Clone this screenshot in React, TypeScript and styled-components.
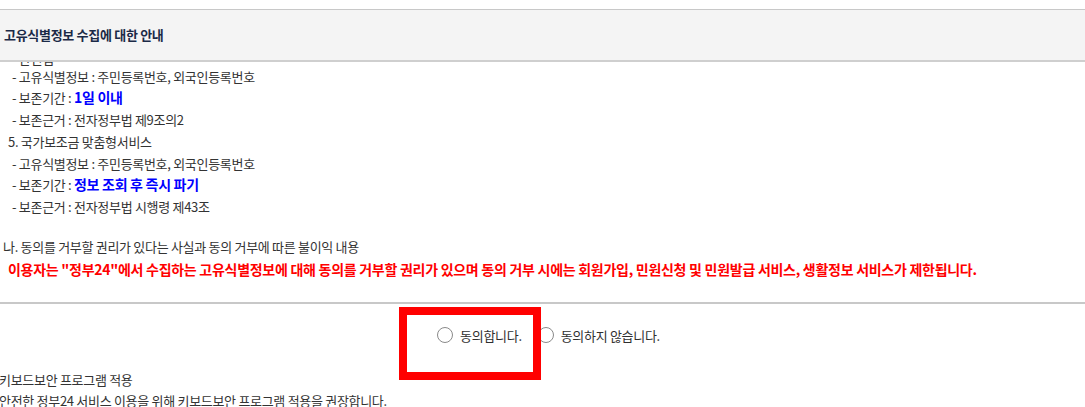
import React, { useLayoutEffect, useRef } from "react";
import styled, { createGlobalStyle } from "styled-components";

const Global = createGlobalStyle`
  html, body { margin: 0; padding: 0; background: #fff; }
  body { font-family: "Noto Sans CJK KR", "Noto Sans", sans-serif; color: #333; overflow: hidden; }
`;

const Page = styled.div`
  position: relative;
  width: 1085px;
  height: 407px;
  padding-top: 9px;
  box-sizing: border-box;
  overflow: hidden;
`;

const Header = styled.div`
  height: 50px;
  border-top: 1px solid #c8c8c8;
  border-bottom: 2px solid #cfcfcf;
  background: #f4f4f4;
  display: flex;
  align-items: center;
  padding-left: 4px;
`;

const HeaderTitle = styled.h2`
  margin: 0;
  font-size: 13px;
  font-weight: 700;
  color: #1b2a47;
  letter-spacing: -0.3px;
  transform: translateY(-1px);
`;

const Scroll = styled.div`
  height: 240px;
  overflow: hidden;
`;

const Body = styled.div`
  font-size: 13px;
  line-height: 21.7px;
  letter-spacing: -0.3px;
  color: #333;
  padding-bottom: 30px;
`;

const Line = styled.div<{ $indent: number; $tight?: boolean }>`
  padding-left: ${(p) => p.$indent}px;
  white-space: nowrap;
  margin-bottom: ${(p) => (p.$tight ? "-4px" : "0")};
`;

const Strong = styled.strong<{ $color: string }>`
  color: ${(p) => p.$color};
  font-weight: 700;
  font-size: 14px;
`;

const Gap = styled.div`
  height: 18.5px;
`;

const Warning = styled.div`
  padding-left: 8px;
  color: #ff0000;
  font-weight: 700;
  font-size: 14px;
  line-height: 23px;
  letter-spacing: -0.28px;
  white-space: nowrap;
`;

const Divider = styled.hr`
  margin: 0;
  border: 0;
  border-top: 2px solid #c8c8c8;
`;

const Choices = styled.div`
  display: flex;
  justify-content: center;
  gap: 16px;
  height: 62px;
  align-items: center;
  padding-left: 12px;
`;

const Choice = styled.label`
  display: flex;
  align-items: center;
  gap: 7px;
  font-size: 13px;
  letter-spacing: -0.3px;
  color: #2f2f2f;
`;

const Circle = styled.span`
  width: 16px;
  height: 16px;
  border-radius: 50%;
  border: 1px solid #8a8a8a;
  background: #fff;
  box-sizing: border-box;
`;

const Footer = styled.div`
  font-size: 13px;
  line-height: 20.5px;
  letter-spacing: -0.3px;
  color: #333;
  margin-left: -1px;
  margin-top: 4px;
`;

const Highlight = styled.div`
  position: absolute;
  left: 399px;
  top: 307px;
  width: 142px;
  height: 73px;
  border: 8px solid #ff0000;
  box-sizing: border-box;
  pointer-events: none;
`;

export default function App() {
  const ref = useRef<HTMLDivElement>(null);
  useLayoutEffect(() => {
    if (ref.current) ref.current.scrollTop = 14;
  }, []);
  return (
    <>
      <Global />
      <Page>
        <Header>
          <HeaderTitle>고유식별정보 수집에 대한 안내</HeaderTitle>
        </Header>
        <Scroll ref={ref}>
          <Body>
            <Line $indent={12} $tight>
              - 관련법
            </Line>
            <Line $indent={12}>- 고유식별정보 : 주민등록번호, 외국인등록번호</Line>
            <Line $indent={12}>
              - 보존기간 : <Strong $color="#0000ff">1일 이내</Strong>
            </Line>
            <Line $indent={12}>- 보존근거 : 전자정부법 제9조의2</Line>
            <Line $indent={8}>5. 국가보조금 맞춤형서비스</Line>
            <Line $indent={12}>- 고유식별정보 : 주민등록번호, 외국인등록번호</Line>
            <Line $indent={12}>
              - 보존기간 : <Strong $color="#0000ff">정보 조회 후 즉시 파기</Strong>
            </Line>
            <Line $indent={12}>- 보존근거 : 전자정부법 시행령 제43조</Line>
            <Gap />
            <Line $indent={3}>나. 동의를 거부할 권리가 있다는 사실과 동의 거부에 따른 불이익 내용</Line>
            <Warning>
              이용자는 "정부24"에서 수집하는 고유식별정보에 대해 동의를 거부할 권리가 있으며 동의 거부 시에는 회원가입, 민원신청 및 민원발급 서비스, 생활정보 서비스가 제한됩니다.
            </Warning>
          </Body>
        </Scroll>
        <Divider />
        <Choices>
          <Choice>
            <Circle />
            동의합니다.
          </Choice>
          <Choice>
            <Circle />
            동의하지 않습니다.
          </Choice>
        </Choices>
        <Footer>
          <div>키보드보안 프로그램 적용</div>
          <div>안전한 정부24 서비스 이용을 위해 키보드보안 프로그램 적용을 권장합니다.</div>
        </Footer>
        <Highlight />
      </Page>
    </>
  );
}
